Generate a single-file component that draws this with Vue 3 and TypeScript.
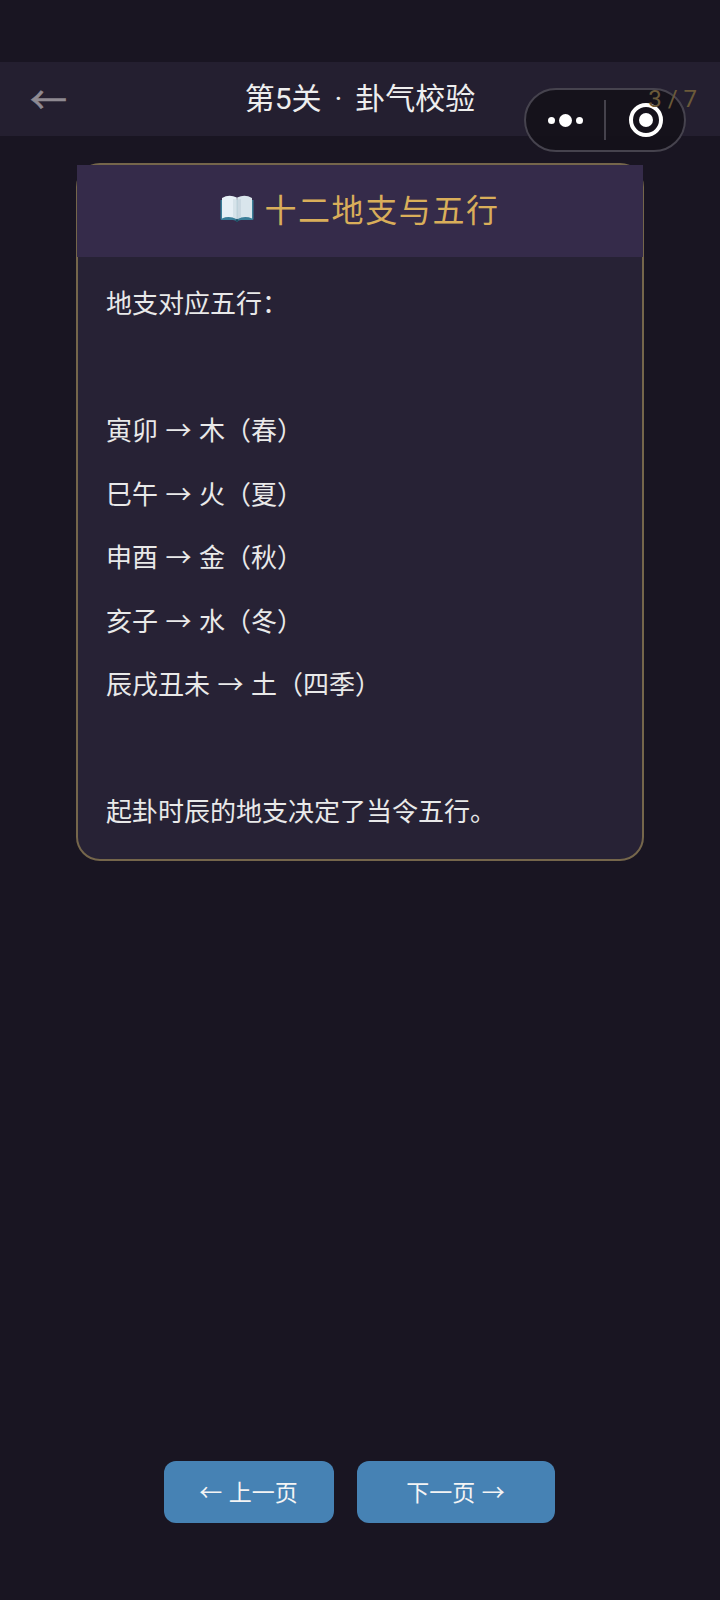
<script setup lang="ts">
const lines: string[] = [
  '地支对应五行：',
  '',
  '寅卯 → 木（春）',
  '巳午 → 火（夏）',
  '申酉 → 金（秋）',
  '亥子 → 水（冬）',
  '辰戌丑未 → 土（四季）',
  '',
  '起卦时辰的地支决定了当令五行。',
]
</script>

<template>
  <div class="page">
    <header class="bar">
      <span class="back">←</span>
      <span class="title">第5关 · 卦气校验</span>
    </header>
    <div class="capsule">
      <span class="dots"><i class="dot" /><i class="dot big" /><i class="dot" /></span>
      <span class="sep" />
      <span class="target"><i /></span>
    </div>
    <span class="count">3 / 7</span>
    <main class="main">
      <section class="card">
        <div class="card-head">
          <svg class="book" viewBox="0 0 34 28" width="34" height="28" aria-hidden="true">
            <path d="M0.5 6 L0.5 25 Q0.5 26 2 26 L13 26 Q15.5 26 17 28 Q18.5 26 21 26 L32 26 Q33.5 26 33.5 25 L33.5 6 Z" fill="#3a7d98" />
            <path d="M2 4 Q9 0 16.8 3.5 L16.8 25 Q9 21.5 2 24.5 Z" fill="#e7f0f6" />
            <path d="M32 4 Q25 0 17.2 3.5 L17.2 25 Q25 21.5 32 24.5 Z" fill="#d9e5ec" />
            <path d="M13 5 Q15 5 16.8 5.5 L16.8 25 Q15 24 13 23.5 Z" fill="#cfdde6" opacity="0.7" />
            <path d="M21 5 Q19 5 17.2 5.5 L17.2 25 Q19 24 21 23.5 Z" fill="#c3d3dd" opacity="0.7" />
            <circle cx="17" cy="26.6" r="1.3" fill="#1c4a5e" />
          </svg>
          <h2 class="card-title">十二地支与五行</h2>
        </div>
        <div class="card-body">
          <p v-for="(line, i) in lines" :key="i" class="line">{{ line }}</p>
        </div>
      </section>
    </main>
    <nav class="nav">
      <button class="btn prev" type="button">← 上一页</button>
      <button class="btn next" type="button">下一页 →</button>
    </nav>
  </div>
</template>

<style>
html, body { margin: 0; background: #191522; }
</style>

<style scoped>
.page {
  position: relative;
  width: 720px;
  height: 1600px;
  display: flex;
  flex-direction: column;
  background: #191522;
  font-family: Roboto, "Noto Sans CJK SC", sans-serif;
  color: #eeeeee;
  overflow: hidden;
}
.bar {
  margin-top: 62px;
  height: 74px;
  flex: none;
  display: flex;
  align-items: center;
  padding: 0 22px 0 30px;
  background: #241f30;
  box-sizing: border-box;
}
.back {
  font-size: 37px;
  line-height: 1;
  color: #8f8a92;
  padding-top: 4px;
  -webkit-text-stroke: 0.7px #8f8a92;
}
.title {
  position: absolute;
  left: 0;
  right: 0;
  top: 78px;
  text-align: center;
  font-size: 30px;
  line-height: 42px;
  word-spacing: 5.5px;
  color: #eeeeee;
}
.count {
  position: absolute;
  right: 23px;
  top: 83px;
  font-size: 24px;
  line-height: 32px;
  color: #6b5a39;
}
.capsule {
  position: absolute;
  left: 524px;
  top: 88px;
  width: 162px;
  height: 64px;
  box-sizing: border-box;
  border: 2.5px solid #46434e;
  border-radius: 32px;
  background: rgba(20, 17, 26, 0.9);
  display: flex;
  align-items: center;
}
.dots { width: 78px; display: flex; justify-content: center; align-items: center; gap: 4px; }
.dot { width: 7px; height: 7px; border-radius: 50%; background: #fff; }
.dot.big { width: 13px; height: 13px; }
.sep { width: 2px; height: 40px; background: #45424c; }
.target {
  margin-left: 23px;
  width: 34px;
  height: 34px;
  box-sizing: border-box;
  border: 4px solid #fff;
  border-radius: 50%;
  display: flex;
  align-items: center;
  justify-content: center;
}
.target i { width: 14px; height: 14px; border-radius: 50%; background: #fff; }
.main { flex: 1; padding: 27px 76px 0; }
.card {
  box-sizing: border-box;
  border: 2px solid #75664b;
  border-radius: 24px;
  background: #272235;
  height: 698px;
}
.card-head {
  height: 92px;
  margin: 0 -1px;
  padding-bottom: 6px;
  box-sizing: border-box;
  background: #352b4a;
  display: flex;
  align-items: center;
  justify-content: center;
  gap: 10px;
}
.book { flex: none; }
.card-title {
  margin: 0;
  font-size: 32px;
  font-weight: 400;
  letter-spacing: 1.6px;
  color: #d9ae5a;
}
.card-body { padding: 16px 28px 0; }
.line {
  margin: 0;
  height: 63.5px;
  line-height: 63.5px;
  font-size: 26px;
  color: #e9e9e9;
  word-spacing: 1px;
}
.nav {
  position: absolute;
  left: 0;
  right: 0;
  top: 1461px;
  padding-right: 2px;
  display: flex;
  justify-content: center;
  gap: 23px;
}
.btn {
  height: 62px;
  border: 0;
  border-radius: 12px;
  background: #4682b4;
  color: #f4f4f4;
  font: inherit;
  font-size: 23px;
  word-spacing: 1px;
  padding: 0 0 3px;
}
.prev { width: 170px; }
.next { width: 198px; }
</style>
